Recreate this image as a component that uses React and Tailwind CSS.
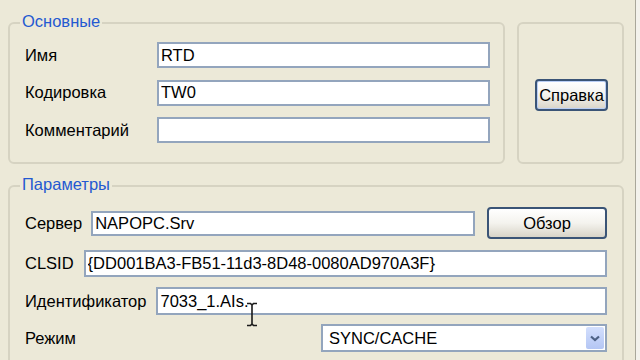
import React from "react";

function Group({ title, className = "", children }) {
  return (
    <div className={`rounded-[6px] border-2 border-[#D6D3C2] ${className}`}>
      {title && (
        <div className="-mt-[13px] ml-[10px] w-fit bg-[#ECE9D8] px-[2px] leading-[20px] text-[#2459D1]">
          {title}
        </div>
      )}
      {children}
    </div>
  );
}

function Field({ value = "", className = "" }) {
  return (
    <input
      readOnly
      value={value}
      className={`min-w-0 border-2 border-[#93A5BD] bg-white px-[2px] text-black outline-none ${className}`}
    />
  );
}

function XpButton({ children, focused, className = "" }) {
  return (
    <button
      className={`rounded-[4px] border-2 border-[#3A5476] bg-gradient-to-b from-white via-[#F4F3EE] to-[#D8D4C8] text-black ${
        focused ? "shadow-[inset_0_0_0_1px_#B9CEF5]" : ""
      } ${className}`}
    >
      {children}
    </button>
  );
}

export default function App() {
  return (
    <div
      className="flex h-[360px] w-[640px] overflow-hidden bg-[#ECE9D8] text-[16.5px] text-black"
      style={{ fontFamily: '"Liberation Sans", Arial, sans-serif' }}
    >
      <main className="relative w-[635px] pl-[8px] pt-[22px]">
        {/* top row */}
        <div className="flex gap-[12px]">
          <Group title="Основные" className="h-[142px] w-[497px]">
            <div className="mt-[11px] flex flex-col gap-[11.5px] pl-[15px] pr-[13px]">
              {[
                ["Имя", "RTD"],
                ["Кодировка", "TW0"],
                ["Комментарий", ""],
              ].map(([label, value]) => (
                <div key={label} className="flex h-[26px] items-center">
                  <span className="w-[132px] shrink-0">{label}</span>
                  <Field value={value} className="h-[26px] flex-1" />
                </div>
              ))}
            </div>
          </Group>

          <Group className="flex h-[142px] w-[107px] items-center justify-center pl-[2px] pt-[4px]">
            <XpButton focused className="h-[32px] w-[73px]">
              Справка
            </XpButton>
          </Group>
        </div>

        {/* parameters */}
        <Group title="Параметры" className="mt-[21px] h-[200px] w-[616px]">
          <div className="mt-[13px] flex flex-col pl-[15px] pr-[15px]">
            <div className="flex h-[32px] items-center">
              <span className="mr-[9px]">Сервер</span>
              <Field value="NAPOPC.Srv" className="h-[25px] flex-1" />
              <XpButton className="ml-[12px] h-[32px] w-[120px]">Обзор</XpButton>
            </div>

            <div className="mt-[11px] flex h-[27px] items-center">
              <span className="mr-[10px]">CLSID</span>
              <Field value="{DD001BA3-FB51-11d3-8D48-0080AD970A3F}" className="h-[27px] flex-1" />
            </div>

            <div className="mt-[10px] flex h-[28px] items-center">
              <span className="mr-[10px]">Идентификатор</span>
              <div className="relative flex flex-1">
                <Field value="7033_1.AIs." className="h-[28px] flex-1" />
                {/* I-beam mouse cursor */}
                <svg
                  className="absolute left-[90px] top-[15px]"
                  width="12"
                  height="25"
                  viewBox="0 0 12 25"
                  fill="none"
                  stroke="#1a1a1a"
                  strokeWidth="1.6"
                >
                  <path d="M1 1.5h3.5L6 3l1.5-1.5H11M6 3v19M1 23.5h3.5L6 22l1.5 1.5H11" />
                </svg>
              </div>
            </div>

            <div className="mt-[9px] flex h-[28px] items-center">
              <span>Режим</span>
              <div className="ml-auto flex h-[28px] w-[286px] items-center border-2 border-[#93A5BD] bg-white">
                <span className="flex-1 pl-[6px]">SYNC/CACHE</span>
                <div className="mr-[1px] flex h-[22px] w-[18px] items-center justify-center rounded-[2px] bg-gradient-to-b from-[#D3DFFD] to-[#B4C6F4]">
                  <svg width="10" height="7" viewBox="0 0 10 7" fill="none" stroke="#4D6185" strokeWidth="2.2">
                    <path d="M1 1.5l4 3.5 4-3.5" />
                  </svg>
                </div>
              </div>
            </div>
          </div>
        </Group>
      </main>
      <div className="w-px bg-[#A9A79A]" />
      <div className="flex-1 bg-[#F3F2EC]" />
    </div>
  );
}
